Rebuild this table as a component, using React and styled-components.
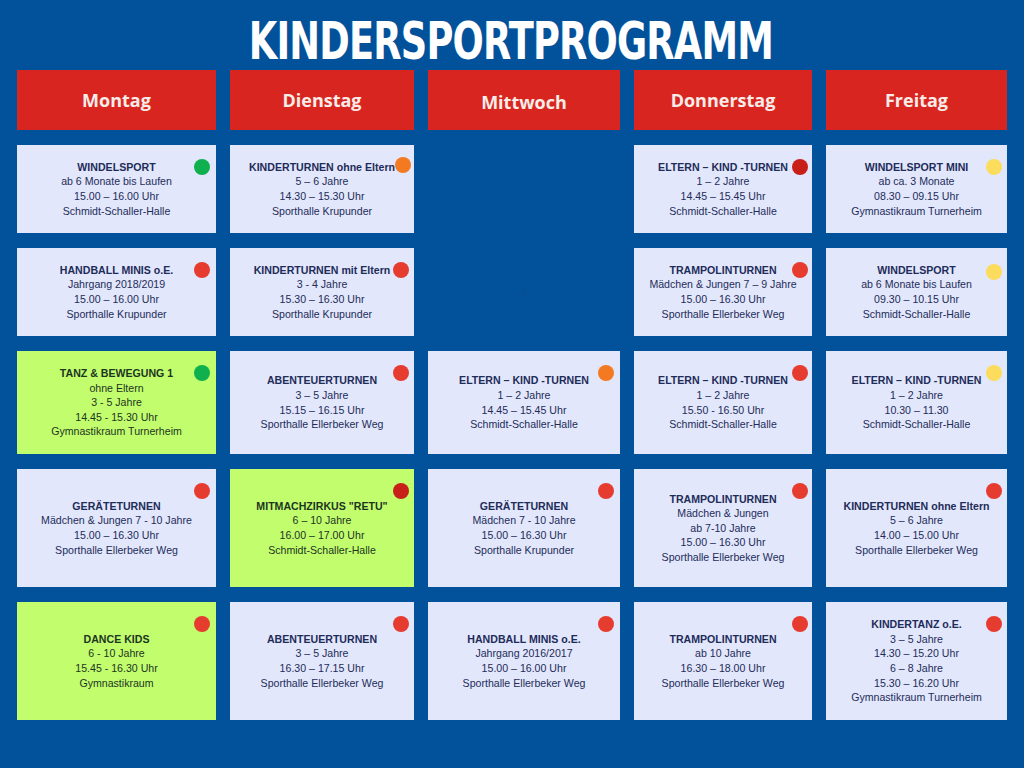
import React from "react";
import styled, { createGlobalStyle } from "styled-components";

const Global = createGlobalStyle`
  html, body { margin: 0; padding: 0; }
  body { background: #02529b; font-family: "Liberation Sans", Arial, sans-serif; }
`;

const Page = styled.div`
  width: 1024px;
  height: 768px;
  background: #02529b;
  box-sizing: border-box;
  padding-left: 17px;
  overflow: hidden;
`;

const TitleBar = styled.div`
  height: 70px;
  display: flex;
  align-items: flex-start;
  justify-content: center;
  padding-right: 20px;
`;

const Title = styled.h1`
  margin: 15px 0 0 0;
  font-family: "DejaVu Sans Condensed", "DejaVu Sans", sans-serif;
  font-weight: 700;
  font-size: 52px;
  line-height: 52px;
  color: #ffffff;
  letter-spacing: -1px;
  transform: scaleX(0.785);
  transform-origin: center;
  white-space: nowrap;
`;

const Grid = styled.div`
  display: grid;
  grid-template-columns: 199px 184px 192px 178px 181px;
  grid-template-rows: 60px 88px 88px 103px 118px 118px;
  column-gap: 14px;
  row-gap: 15px;
`;

const DayHeader = styled.div`
  background: #d9251f;
  color: #f7ece8;
  font-family: "Open Sans", sans-serif;
  font-weight: 700;
  font-size: 18px;
  display: flex;
  align-items: center;
  justify-content: center;
  padding-top: ${(p) => (p.$low ? "4px" : "0")};
  box-sizing: border-box;
`;

const Card = styled.div`
  position: relative;
  background: ${(p) => (p.$green ? "#c2fd6e" : "#e2e7fb")};
  color: ${(p) => (p.$green ? "#1c3522" : "#1e2c5a")};
  display: flex;
  flex-direction: column;
  align-items: center;
  justify-content: center;
  text-align: center;
  font-size: 10.6px;
  line-height: 14.6px;
`;

const CardTitle = styled.div`
  font-weight: 700;
`;

const Line = styled.div``;

const Dot = styled.span`
  position: absolute;
  top: ${(p) => p.$top ?? 14}px;
  right: ${(p) => p.$right ?? 5}px;
  width: 16px;
  height: 16px;
  border-radius: 50%;
  background: ${(p) => p.$color};
`;

const Empty = styled.div`
  display: flex;
  align-items: center;
  justify-content: center;
`;

const Tiny = styled.span`
  font-size: 8px;
  color: #1a4680;
`;

const C = {
  red: "#e63c30",
  green: "#10b04f",
  orange: "#f47a22",
  dark: "#c81f19",
  yellow: "#fbdc5c",
};

const days = ["Montag", "Dienstag", "Mittwoch", "Donnerstag", "Freitag"];

const rows = [
  [
    { t: "WINDELSPORT", l: ["ab 6 Monate bis Laufen", "15.00 – 16.00 Uhr", "Schmidt-Schaller-Halle"], d: C.green, right: 6 },
    { t: "KINDERTURNEN ohne Eltern", l: ["5 – 6 Jahre", "14.30 – 15.30 Uhr", "Sporthalle Krupunder"], d: C.orange, right: 3, top: 12 },
    null,
    { t: "ELTERN – KIND -TURNEN", l: ["1 – 2 Jahre", "14.45 – 15.45 Uhr", "Schmidt-Schaller-Halle"], d: C.dark, right: 4 },
    { t: "WINDELSPORT MINI", l: ["ab ca. 3 Monate", "08.30 – 09.15 Uhr", "Gymnastikraum Turnerheim"], d: C.yellow },
  ],
  [
    { t: "HANDBALL MINIS o.E.", l: ["Jahrgang 2018/2019", "15.00 – 16.00 Uhr", "Sporthalle Krupunder"], d: C.red, right: 6 },
    { t: "KINDERTURNEN mit Eltern", l: ["3 - 4 Jahre", "15.30 – 16.30 Uhr", "Sporthalle Krupunder"], d: C.red },
    "c",
    { t: "TRAMPOLINTURNEN", l: ["Mädchen & Jungen 7 – 9 Jahre", "15.00 – 16.30 Uhr", "Sporthalle Ellerbeker Weg"], d: C.red, right: 4 },
    { t: "WINDELSPORT", l: ["ab 6 Monate bis Laufen", "09.30 – 10.15 Uhr", "Schmidt-Schaller-Halle"], d: C.yellow, top: 16 },
  ],
  [
    { t: "TANZ & BEWEGUNG 1", l: ["ohne Eltern", "3 - 5 Jahre", "14.45 - 15.30 Uhr", "Gymnastikraum Turnerheim"], d: C.green, green: true, right: 6 },
    { t: "ABENTEUERTURNEN", l: ["3 – 5 Jahre", "15.15 – 16.15 Uhr", "Sporthalle Ellerbeker Weg"], d: C.red },
    { t: "ELTERN – KIND -TURNEN", l: ["1 – 2 Jahre", "14.45 – 15.45 Uhr", "Schmidt-Schaller-Halle"], d: C.orange, right: 6 },
    { t: "ELTERN – KIND -TURNEN", l: ["1 – 2 Jahre", "15.50 - 16.50 Uhr", "Schmidt-Schaller-Halle"], d: C.red, right: 4 },
    { t: "ELTERN – KIND -TURNEN", l: ["1 – 2 Jahre", "10.30 – 11.30", "Schmidt-Schaller-Halle"], d: C.yellow },
  ],
  [
    { t: "GERÄTETURNEN", l: ["Mädchen & Jungen 7 - 10 Jahre", "15.00 – 16.30 Uhr", "Sporthalle Ellerbeker Weg"], d: C.red, right: 6 },
    { t: "MITMACHZIRKUS \"RETU\"", l: ["6 – 10 Jahre", "16.00 – 17.00 Uhr", "Schmidt-Schaller-Halle"], d: C.dark, green: true },
    { t: "GERÄTETURNEN", l: ["Mädchen 7 - 10 Jahre", "15.00 – 16.30 Uhr", "Sporthalle Krupunder"], d: C.red, right: 6 },
    { t: "TRAMPOLINTURNEN", l: ["Mädchen & Jungen", "ab 7-10 Jahre", "15.00 – 16.30 Uhr", "Sporthalle Ellerbeker Weg"], d: C.red, right: 4 },
    { t: "KINDERTURNEN ohne Eltern", l: ["5 – 6 Jahre", "14.00 – 15.00 Uhr", "Sporthalle Ellerbeker Weg"], d: C.red },
  ],
  [
    { t: "DANCE KIDS", l: ["6 - 10 Jahre", "15.45 - 16.30 Uhr", "Gymnastikraum"], d: C.red, green: true, right: 6 },
    { t: "ABENTEUERTURNEN", l: ["3 – 5 Jahre", "16.30 – 17.15 Uhr", "Sporthalle Ellerbeker Weg"], d: C.red },
    { t: "HANDBALL MINIS o.E.", l: ["Jahrgang 2016/2017", "15.00 – 16.00 Uhr", "Sporthalle Ellerbeker Weg"], d: C.red, right: 6 },
    { t: "TRAMPOLINTURNEN", l: ["ab 10 Jahre", "16.30 – 18.00 Uhr", "Sporthalle Ellerbeker Weg"], d: C.red, right: 4 },
    { t: "KINDERTANZ o.E.", l: ["3 – 5 Jahre", "14.30 – 15.20 Uhr", "6 – 8 Jahre", "15.30 – 16.20 Uhr", "Gymnastikraum Turnerheim"], d: C.red },
  ],
];

export default function App() {
  return (
    <>
      <Global />
      <Page>
        <TitleBar>
          <Title>KINDERSPORTPROGRAMM</Title>
        </TitleBar>
        <Grid>
          {days.map((d) => (
            <DayHeader key={d} $low={d === "Mittwoch"}>{d}</DayHeader>
          ))}
          {rows.flatMap((row, ri) =>
            row.map((c, ci) => {
              const key = `${ri}-${ci}`;
              if (c === null) return <Empty key={key} />;
              if (typeof c === "string")
                return (
                  <Empty key={key}>
                    <Tiny>{c}</Tiny>
                  </Empty>
                );
              return (
                <Card key={key} $green={c.green}>
                  <CardTitle>{c.t}</CardTitle>
                  {c.l.map((x, i) => (
                    <Line key={i}>{x}</Line>
                  ))}
                  <Dot $color={c.d} $right={c.right} $top={c.top} />
                </Card>
              );
            })
          )}
        </Grid>
      </Page>
    </>
  );
}
